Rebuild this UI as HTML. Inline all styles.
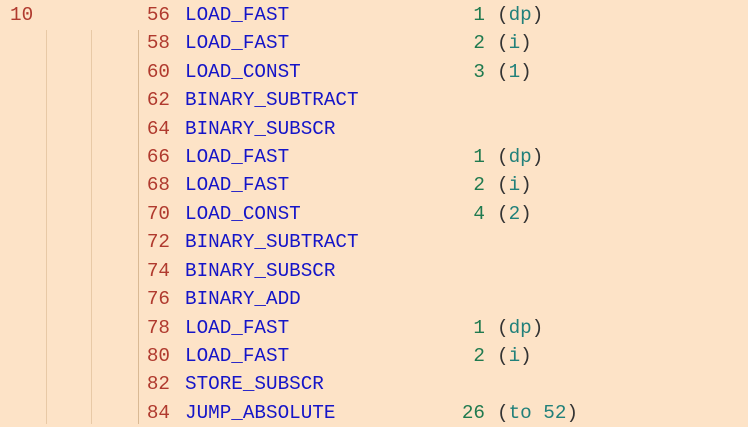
<!DOCTYPE html>
<html><head><style>
html,body{margin:0;padding:0}
body{width:748px;height:424px;overflow:hidden;background:#fde3c7;font-family:"Liberation Mono",monospace;font-size:19.3px;position:relative}
.r{position:absolute;left:0;width:748px;height:28px;line-height:28px;white-space:pre}
.ln{position:absolute;left:10px;color:#b03a2e}
.off{position:absolute;right:578px;color:#b03a2e}
.op{position:absolute;left:185px;color:#1515c8}
.arg{position:absolute;right:263px;color:#207a4f}
.p{position:absolute;left:497px;color:#333}
.p i{font-style:normal;color:#21807a}
.g{position:absolute;top:30px;height:394px;width:1px;background:#e8c9a6}
</style></head><body>
<div class="g" style="left:46px"></div>
<div class="g" style="left:91px"></div>
<div class="g" style="left:138px;background:#d9b994"></div>
<div class="r" style="top:1px"><span class="ln">10</span><span class="off">56</span><span class="op">LOAD_FAST</span><span class="arg">1</span><span class="p">(<i>dp</i>)</span></div>
<div class="r" style="top:29px"><span class="off">58</span><span class="op">LOAD_FAST</span><span class="arg">2</span><span class="p">(<i>i</i>)</span></div>
<div class="r" style="top:58px"><span class="off">60</span><span class="op">LOAD_CONST</span><span class="arg">3</span><span class="p">(<i>1</i>)</span></div>
<div class="r" style="top:86px"><span class="off">62</span><span class="op">BINARY_SUBTRACT</span></div>
<div class="r" style="top:115px"><span class="off">64</span><span class="op">BINARY_SUBSCR</span></div>
<div class="r" style="top:143px"><span class="off">66</span><span class="op">LOAD_FAST</span><span class="arg">1</span><span class="p">(<i>dp</i>)</span></div>
<div class="r" style="top:171px"><span class="off">68</span><span class="op">LOAD_FAST</span><span class="arg">2</span><span class="p">(<i>i</i>)</span></div>
<div class="r" style="top:200px"><span class="off">70</span><span class="op">LOAD_CONST</span><span class="arg">4</span><span class="p">(<i>2</i>)</span></div>
<div class="r" style="top:228px"><span class="off">72</span><span class="op">BINARY_SUBTRACT</span></div>
<div class="r" style="top:257px"><span class="off">74</span><span class="op">BINARY_SUBSCR</span></div>
<div class="r" style="top:285px"><span class="off">76</span><span class="op">BINARY_ADD</span></div>
<div class="r" style="top:314px"><span class="off">78</span><span class="op">LOAD_FAST</span><span class="arg">1</span><span class="p">(<i>dp</i>)</span></div>
<div class="r" style="top:342px"><span class="off">80</span><span class="op">LOAD_FAST</span><span class="arg">2</span><span class="p">(<i>i</i>)</span></div>
<div class="r" style="top:370px"><span class="off">82</span><span class="op">STORE_SUBSCR</span></div>
<div class="r" style="top:399px"><span class="off">84</span><span class="op">JUMP_ABSOLUTE</span><span class="arg">26</span><span class="p">(<i>to 52</i>)</span></div>
</body></html>
